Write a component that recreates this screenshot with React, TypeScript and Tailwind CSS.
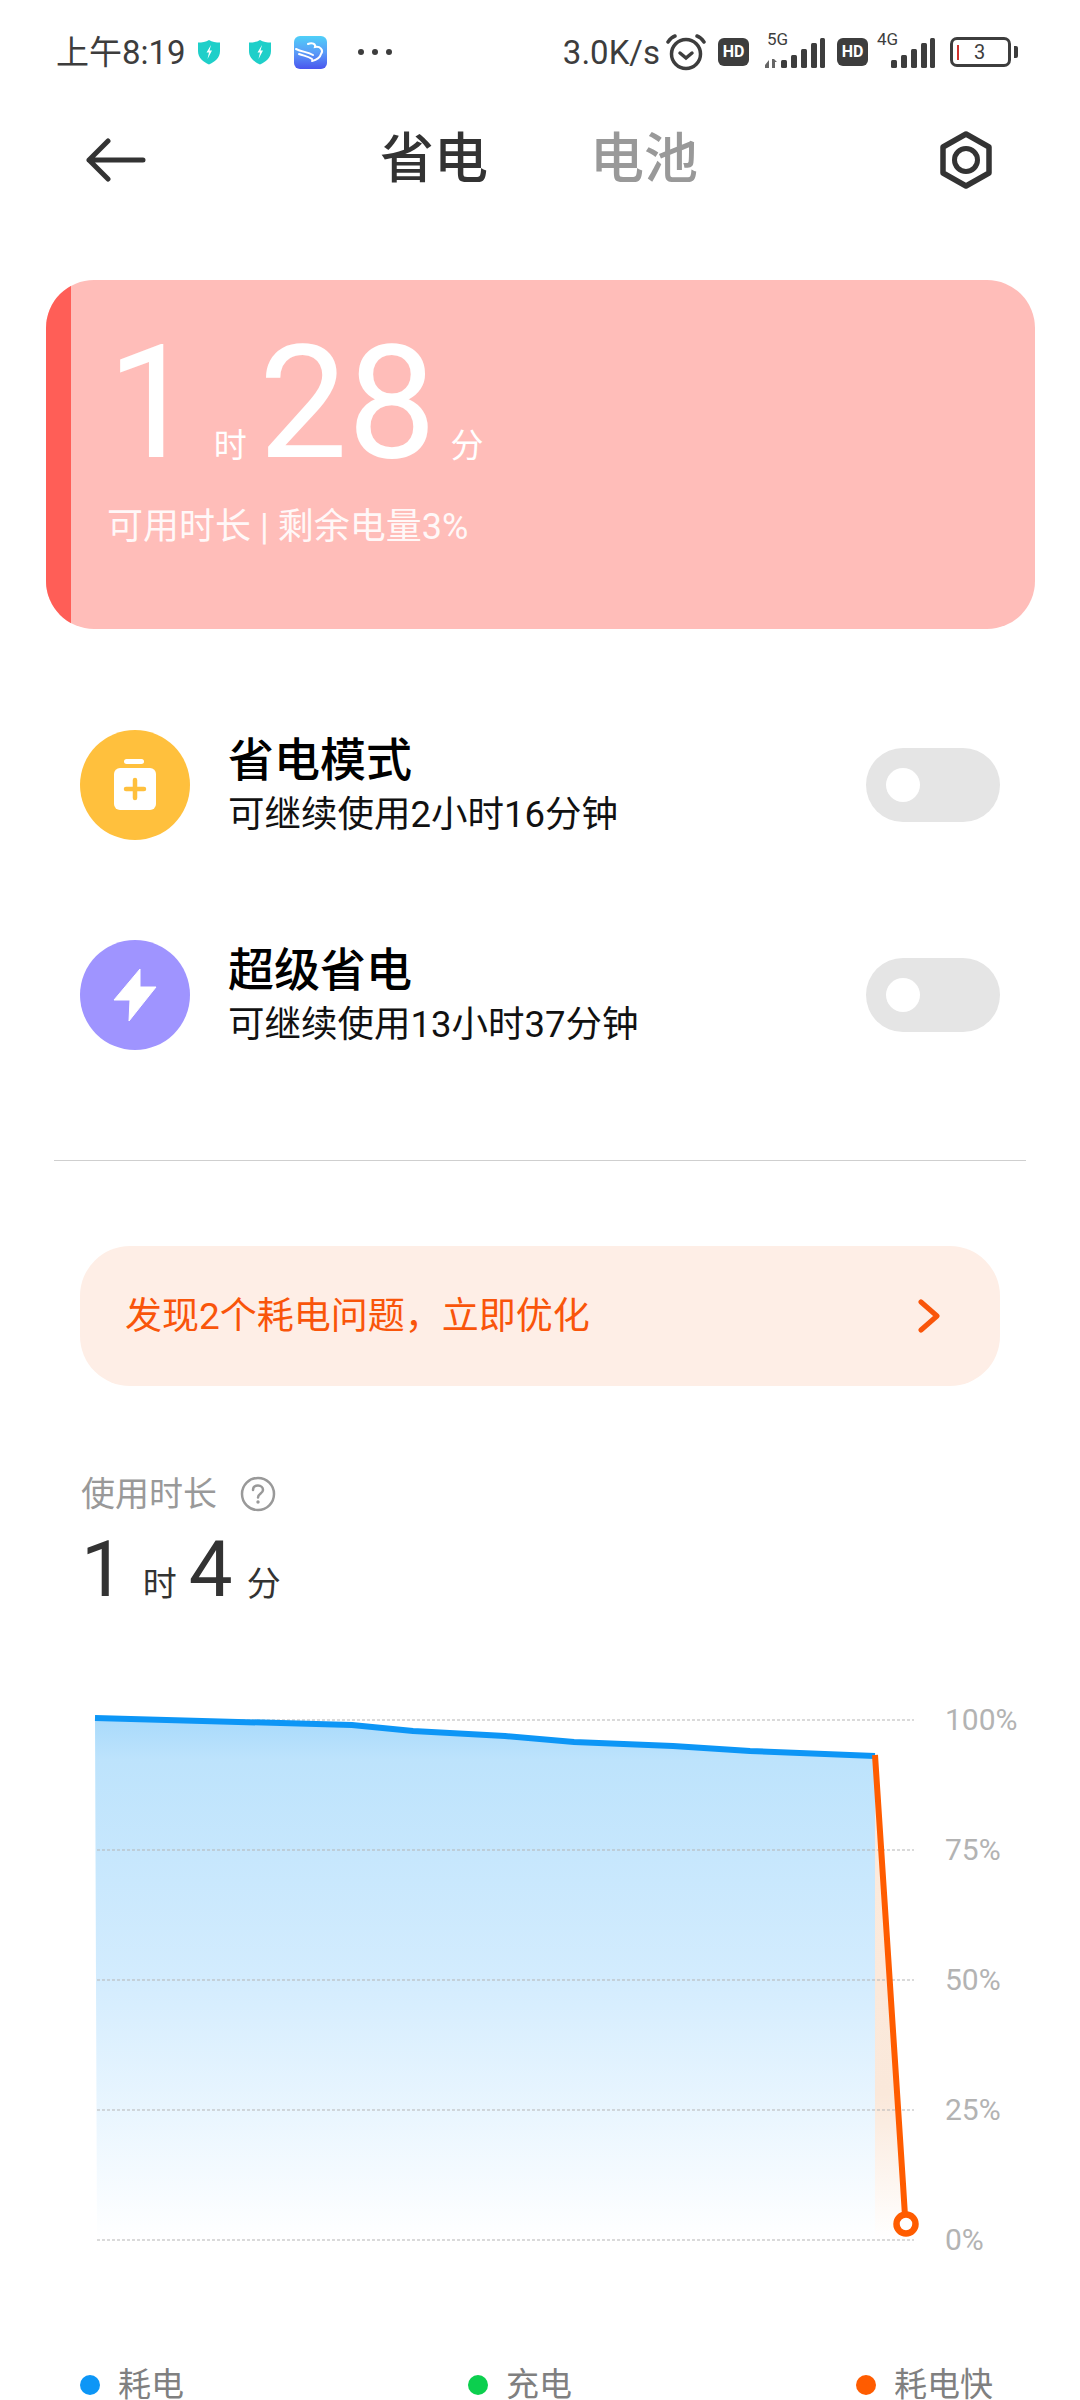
import React from "react"

const FONT = 'Roboto, "Noto Sans CJK SC", sans-serif'

function Shield() {
  return (
    <svg width="24" height="26" viewBox="0 0 24 26">
      <path d="M12 1C15 3 19 3.600 23 3.600V12C23 19 17.500 23 12 25.500C6.500 23 1 19 1 12V3.600C5 3.600 9 3 12 1Z" fill="#1fcfc9" />
      <path d="M14 6L9.500 13.500H12L10.500 20L15 11.500H12.500Z" fill="#fff" />
    </svg>
  )
}

function AppIcon() {
  return (
    <svg width="33" height="33" viewBox="0 0 33 33">
      <defs>
        <linearGradient id="app" x1="0" y1="0" x2="0" y2="1">
          <stop offset="0" stopColor="#4fd0f8" />
          <stop offset="0.5" stopColor="#5a9cf8" />
          <stop offset="1" stopColor="#4a55ee" />
        </linearGradient>
      </defs>
      <rect width="33" height="33" rx="6" fill="url(#app)" />
      <path d="M2 13C8 16 14 16 19 19M5 18C10 20 14 20 18 23M14 8C18 6 22 8 21 11C26 10 30 14 27 18C26 22 22 24 18 25" fill="none" stroke="#fff" strokeWidth="2" strokeLinecap="round" />
    </svg>
  )
}

function Alarm() {
  return (
    <svg width="40" height="38" viewBox="0 0 40 38" fill="none" stroke="#3d3d3d" strokeLinecap="round">
      <circle cx="20" cy="21" r="14.500" strokeWidth="3.500" />
      <path d="M14 20L20 25L26 20" strokeWidth="3.500" />
      <path d="M2 9C4 6 6 4 9 3M38 9C36 6 34 4 31 3" strokeWidth="3.500" />
    </svg>
  )
}

function Hd() {
  return (
    <div className="flex h-[28px] w-[31px] items-center justify-center rounded-[6px] bg-[#3d3d3d] text-[16px] leading-none font-bold text-white">
      HD
    </div>
  )
}

function Signal({ label, arrows }: { label: string; arrows?: boolean }) {
  return (
    <div className="relative h-[34px] w-[60px]">
      <svg width="60" height="34" viewBox="0 0 60 34" className="absolute top-0 left-0">
        <rect x="16" y="25" width="6" height="8" rx="1.500" fill="#3d3d3d" />
        <rect x="26" y="20" width="6" height="13" rx="1.500" fill="#3d3d3d" />
        <rect x="36" y="14" width="6" height="19" rx="1.500" fill="#3d3d3d" />
        <rect x="46" y="8" width="6" height="25" rx="1.500" fill="#3d3d3d" />
        <rect x="55" y="3" width="5" height="30" rx="1.500" fill="#3d3d3d" />
        {arrows && <path d="M0 30L4 25V33H0ZM7 33V24H9L12 27H10V33Z" fill="#666" />}
      </svg>
      <span className="absolute top-[-6px] left-[2px] text-[17px] leading-[20px] text-[#3d3d3d]">{label}</span>
    </div>
  )
}

function Battery() {
  return (
    <div className="flex items-center gap-[3px]">
      <div className="flex h-[30px] w-[61px] items-center rounded-[7px] border-[3px] border-[#3d3d3d] pl-[4px]">
        <div className="h-[15px] w-[2px] bg-[#d0312d]" />
        <span className="ml-[15px] text-[20px] leading-none text-[#3d3d3d]">3</span>
      </div>
      <div className="h-[12px] w-[4px] rounded-r-[2px] bg-[#3d3d3d]" />
    </div>
  )
}

function StatusBar() {
  return (
    <div className="flex h-[104px] items-center pr-[62px] pl-[56px] text-[#3d3d3d]">
      <span className="text-[33px] leading-none">上午8:19</span>
      <div className="ml-[11px]"><Shield /></div>
      <div className="ml-[27px]"><Shield /></div>
      <div className="ml-[22px]"><AppIcon /></div>
      <div className="ml-[31px] flex gap-[8px]">
        <div className="h-[6px] w-[6px] rounded-full bg-[#3d3d3d]" />
        <div className="h-[6px] w-[6px] rounded-full bg-[#3d3d3d]" />
        <div className="h-[6px] w-[6px] rounded-full bg-[#3d3d3d]" />
      </div>
      <div className="ml-auto flex items-center">
        <span className="text-[33px] leading-none">3.0K/s</span>
        <div className="ml-[6px]"><Alarm /></div>
        <div className="ml-[12px]"><Hd /></div>
        <div className="ml-[16px]"><Signal label="5G" arrows /></div>
        <div className="ml-[12px]"><Hd /></div>
        <div className="ml-[7px]"><Signal label="4G" /></div>
        <div className="ml-[15px]"><Battery /></div>
      </div>
    </div>
  )
}

function NavBar() {
  return (
    <div className="flex h-[112px] items-center pr-[86px] pl-[84px]">
      <svg width="62" height="44" viewBox="0 0 62 44" fill="none" stroke="#333" strokeWidth="5" strokeLinecap="round" strokeLinejoin="round">
        <path d="M24 3L5 22L24 41M5 22H59" />
      </svg>
      <div className="ml-[234px] flex gap-[102px] text-[54px] leading-none font-medium">
        <span className="text-[#333]">省电</span>
        <span className="text-[#999]">电池</span>
      </div>
      <svg className="ml-auto" width="56" height="60" viewBox="0 0 56 60" fill="none" stroke="#333" strokeWidth="5.500" strokeLinejoin="round">
        <path d="M28 4L51 17V43L28 56L5 43V17Z" />
        <circle cx="28" cy="30" r="11.500" strokeWidth="5" />
      </svg>
    </div>
  )
}

function RemainingCard() {
  return (
    <div className="mt-[64px] ml-[46px] flex h-[349px] w-[989px] overflow-hidden rounded-[48px] bg-[#ffbdb9]">
      <div className="h-full w-[25px] bg-[#ff5e57]" />
      <div className="pt-[43px] pl-[36px] text-white">
        <div className="flex h-[160px] items-baseline font-normal">
          <span className="text-[158px] leading-[160px]">1</span>
          <span className="ml-[18px] text-[33px] leading-none">时</span>
          <span className="ml-[12px] text-[158px] leading-[160px]">28</span>
          <span className="ml-[14px] text-[33px] leading-none">分</span>
        </div>
        <div className="mt-[22px] text-[36px] leading-[44px] whitespace-nowrap text-[#fff8f8]">可用时长 | 剩余电量3%</div>
      </div>
    </div>
  )
}

function Toggle() {
  return (
    <div className="ml-auto flex h-[74px] w-[134px] items-center rounded-full bg-[#e5e5e5] pl-[20px]">
      <div className="h-[34px] w-[34px] rounded-full bg-white" />
    </div>
  )
}

function ModeRow({ title, sub, color, icon }: { title: string; sub: string; color: string; icon: React.ReactNode }) {
  return (
    <div className="flex h-[110px] items-center">
      <div className={`flex h-[110px] w-[110px] items-center justify-center rounded-full ${color}`}>{icon}</div>
      <div className="ml-[38px]">
        <div className="text-[46px] leading-[56px] font-medium text-black">{title}</div>
        <div className="mt-[4px] text-[36.500px] leading-[46px] text-[#111]">{sub}</div>
      </div>
      <Toggle />
    </div>
  )
}

function Chart() {
  const blue = "95,1724 352,1731 413,1737 505,1742 574,1748 673,1752 750,1757 875,1762"
  const grid = [1726, 1856, 1986, 2116, 2246]
  return (
    <div className="mt-[95px] flex">
      <svg className="ml-[90px]" width="840" height="550" viewBox="90 1711 840 550">
        <defs>
          <linearGradient id="fillBlue" x1="0" y1="0" x2="0" y2="1">
            <stop offset="0" stopColor="#a8dafb" />
            <stop offset="0.08" stopColor="#bde3fc" />
            <stop offset="0.5" stopColor="#d3ecfe" />
            <stop offset="1" stopColor="#ffffff" />
          </linearGradient>
          <linearGradient id="fillOrange" x1="0" y1="0" x2="0" y2="1">
            <stop offset="0" stopColor="#fdebdd" />
            <stop offset="0.7" stopColor="#fae8da" />
            <stop offset="1" stopColor="#ffffff" />
          </linearGradient>
        </defs>
        <polygon points={`97,2246 ${blue} 875,2246`} fill="url(#fillBlue)" />
        <polygon points="875,1762 906,2230 906,2246 875,2246" fill="url(#fillOrange)" />
        {grid.map((y) => (
          <line key={y} x1="97" y1={y} x2="914" y2={y} stroke="#b5b5b5" strokeWidth="1" strokeDasharray="3 2" />
        ))}
        <polyline points={blue} fill="none" stroke="#0d96f6" strokeWidth="6" />
        <polyline points="875,1761 903,2190 905,2222" fill="none" stroke="#ff5c00" strokeWidth="6" />
        <circle cx="906" cy="2230" r="9.500" fill="#fff" stroke="#ff5c00" strokeWidth="6.500" />
      </svg>
      <div className="ml-[15px] flex flex-col gap-[100px] text-[30px] leading-[30px] text-[#b3b3b3]">
        <span>100%</span>
        <span>75%</span>
        <span>50%</span>
        <span>25%</span>
        <span>0%</span>
      </div>
    </div>
  )
}

function LegendItem({ color, label, width }: { color: string; label: string; width: string }) {
  return (
    <div className={`flex items-center ${width}`}>
      <div className={`h-[20px] w-[20px] rounded-full ${color}`} />
      <span className="ml-[18px] text-[33px] leading-[40px] text-[#808080]">{label}</span>
    </div>
  )
}

export default function App() {
  return (
    <div className="h-[2400px] w-[1080px] overflow-hidden bg-white" style={{ fontFamily: FONT }}>
      <StatusBar />
      <NavBar />
      <RemainingCard />

      <div className="mt-[101px] flex flex-col gap-[100px] pr-[80px] pl-[80px]">
        <ModeRow
          title="省电模式"
          sub="可继续使用2小时16分钟"
          color="bg-[#ffc03d]"
          icon={
            <svg width="46" height="52" viewBox="0 0 46 52">
              <rect x="12" y="0" width="20" height="5" rx="2.500" fill="#fff" />
              <rect x="2" y="9" width="42" height="42" rx="6" fill="#fff" />
              <path d="M23 21V39M14 30H32" stroke="#ffc03d" strokeWidth="4.500" strokeLinecap="round" />
            </svg>
          }
        />
        <ModeRow
          title="超级省电"
          sub="可继续使用13小时37分钟"
          color="bg-[#9f94ff]"
          icon={
            <svg width="44" height="54" viewBox="0 0 44 54">
              <path d="M27 1L1 32H17L16 53L43 19H27Z" fill="#fff" stroke="#fff" strokeWidth="1" strokeLinejoin="round" />
            </svg>
          }
        />
      </div>

      <div className="mt-[110px] ml-[54px] h-[1px] w-[972px] bg-[#cfcfcf]" />

      <div className="mt-[85px] ml-[80px] flex h-[140px] w-[920px] items-center rounded-[50px] bg-[#feeee6] pr-[60px] pl-[45px]">
        <span className="text-[37px] leading-none text-[#f9550a]">发现2个耗电问题，立即优化</span>
        <svg className="ml-auto" width="22" height="34" viewBox="0 0 22 34" fill="none" stroke="#f9550a" strokeWidth="5" strokeLinecap="round" strokeLinejoin="round">
          <path d="M3 3L19 17L3 31" />
        </svg>
      </div>

      <div className="mt-[88px] ml-[81px] flex items-center">
        <span className="text-[34px] leading-[40px] text-[#999]">使用时长</span>
        <svg className="ml-[23px]" width="36" height="36" viewBox="0 0 36 36" fill="none">
          <circle cx="18" cy="18" r="16" stroke="#999" strokeWidth="2.500" />
          <path d="M13 14C13 11 15 9.500 18 9.500C21 9.500 23 11.500 23 14C23 17.500 18 17.500 18 21.500" stroke="#999" strokeWidth="2.500" strokeLinecap="round" />
          <circle cx="18" cy="26" r="1.700" fill="#999" />
        </svg>
      </div>
      <div className="mt-[16px] ml-[81px] flex items-baseline text-[#333]">
        <span className="text-[78px] leading-[80px]">1</span>
        <span className="ml-[18px] text-[34px] leading-none">时</span>
        <span className="ml-[12px] text-[78px] leading-[80px]">4</span>
        <span className="ml-[14px] text-[34px] leading-none">分</span>
      </div>

      <Chart />

      <div className="mt-[110px] ml-[80px] flex">
        <LegendItem color="bg-[#0d96f6]" label="耗电" width="w-[388px]" />
        <LegendItem color="bg-[#0ccf4e]" label="充电" width="w-[388px]" />
        <LegendItem color="bg-[#ff5c00]" label="耗电快" width="w-[144px]" />
      </div>
    </div>
  )
}
